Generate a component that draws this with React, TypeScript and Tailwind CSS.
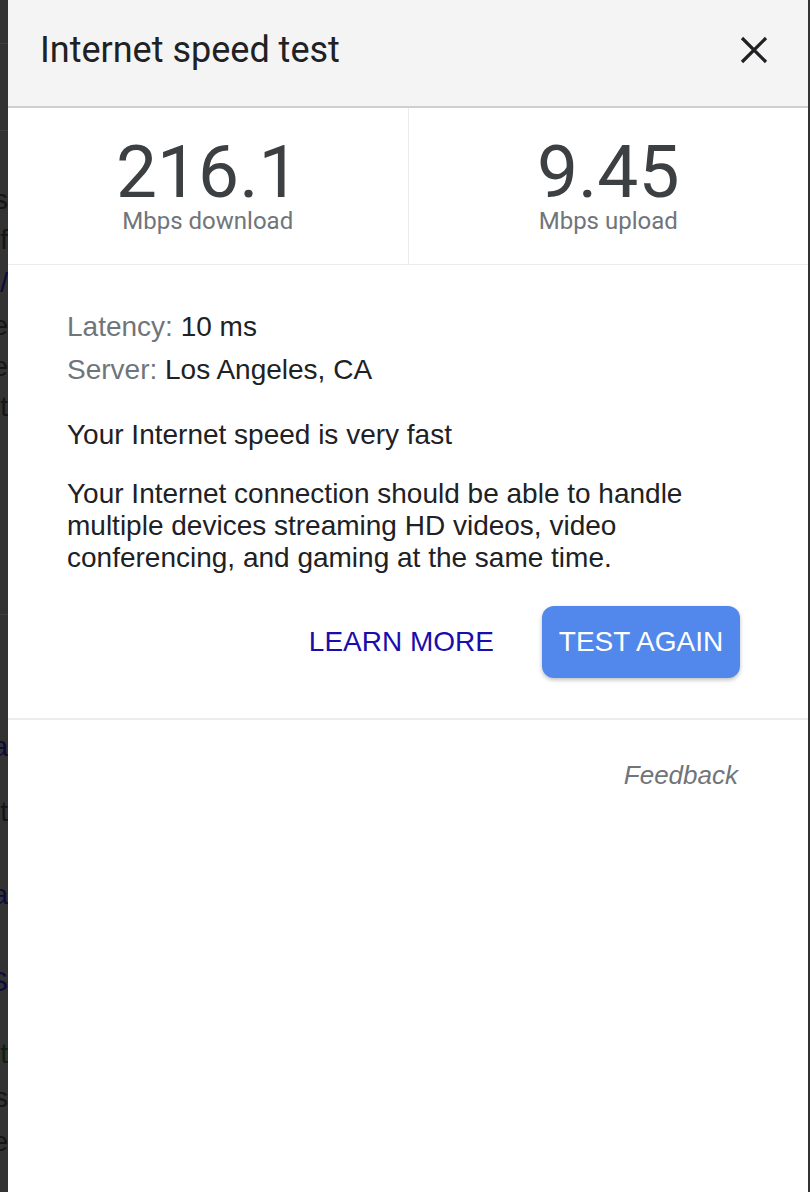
const leftBits: { h: number; t: string; c?: string; line?: boolean }[] = [
  { h: 44, t: "", line: true },
  { h: 87, t: "", line: true },
  { h: 49, t: "" },
  { h: 40, t: "s" },
  { h: 40, t: "f" },
  { h: 45, t: "/", c: "text-[#0b0b3a]" },
  { h: 42, t: "e" },
  { h: 40, t: "re" },
  { h: 40, t: "t" },
  { h: 188, t: "", line: true },
  { h: 112, t: "" },
  { h: 40, t: "Da", c: "text-[#0b0b3a]" },
  { h: 90, t: "t" },
  { h: 75, t: "Da", c: "text-[#0b0b3a]" },
  { h: 100, t: "S", c: "text-[#0b0b3a]" },
  { h: 44, t: "t", c: "text-[#0d1f0d]" },
  { h: 44, t: "s" },
  { h: 44, t: "e" },
];

export default function App() {
  return (
    <div className="flex h-[1192px] w-[810px] bg-[#333333] font-['Liberation_Sans',Arial,sans-serif]">
      <div className="flex w-[8px] shrink-0 flex-col overflow-hidden">
        {leftBits.map((b, i) => (
          <div
            key={i}
            style={{ height: b.h }}
            className={`flex shrink-0 items-center justify-end text-[28px] ${b.line ? "border-b border-[#3f3f3f]" : ""} ${b.c ?? "text-[#151515]"}`}
          >
            <span className="whitespace-nowrap">{b.t}</span>
          </div>
        ))}
      </div>

      <div className="flex w-[800px] flex-col bg-white">
        <div className="flex h-[108px] items-center justify-between border-b-2 border-[#cfcfcf] bg-[#f4f4f4] pb-[6px] pl-[32px] pr-[40px]">
          <h1 className="font-['Roboto',sans-serif] text-[36px] text-[#202124]">Internet speed test</h1>
          <svg width="28" height="28" viewBox="0 0 28 28" className="text-[#202124]">
            <path d="M2 2 L26 26 M26 2 L2 26" stroke="currentColor" strokeWidth="3.2" />
          </svg>
        </div>

        <div className="flex h-[157px] border-b border-[#ebebeb]">
          <Stat value="216.1" label="Mbps download" />
          <div className="w-px bg-[#ebebeb]" />
          <Stat value="9.45" label="Mbps upload" />
        </div>

        <div className="flex flex-col px-[59px] pt-[40px] text-[28px] text-[#202124]">
          <div className="leading-[43px]">
            <span className="text-[#70757a]">Latency: </span>10 ms
          </div>
          <div className="leading-[43px]">
            <span className="text-[#70757a]">Server: </span>Los Angeles, CA
          </div>
          <div className="mt-[28px] leading-[32px]">Your Internet speed is very fast</div>
          <p className="mt-[27px] leading-[32px]">
            Your Internet connection should be able to handle multiple devices streaming HD videos, video conferencing, and gaming at the same time.
          </p>
          <div className="mt-[32px] flex items-center justify-end gap-[48px] pr-[9px]">
            <button className="text-[28px] text-[#1a0dab]">LEARN MORE</button>
            <button className="h-[72px] w-[198px] rounded-[12px] bg-[#5288ec] text-[28px] text-white shadow-[0_2px_4px_rgba(0,0,0,0.25)]">
              TEST AGAIN
            </button>
          </div>
        </div>

        <div className="mt-[40px] border-t-2 border-[#ececec]" />
        <div className="flex justify-end pr-[70px] pt-[40px]">
          <span className="text-[26px] leading-[30px] italic text-[#70757a]">Feedback</span>
        </div>
      </div>
      <div className="w-[2px] shrink-0" />
    </div>
  );
}

function Stat({ value, label }: { value: string; label: string }) {
  return (
    <div className="flex flex-1 flex-col items-center pt-[28px] font-['Roboto',sans-serif]">
      <div className="text-[73px] leading-[72px] text-[#3c4043]">{value}</div>
      <div className="text-[24px] leading-[26px] text-[#70757a]">{label}</div>
    </div>
  );
}
